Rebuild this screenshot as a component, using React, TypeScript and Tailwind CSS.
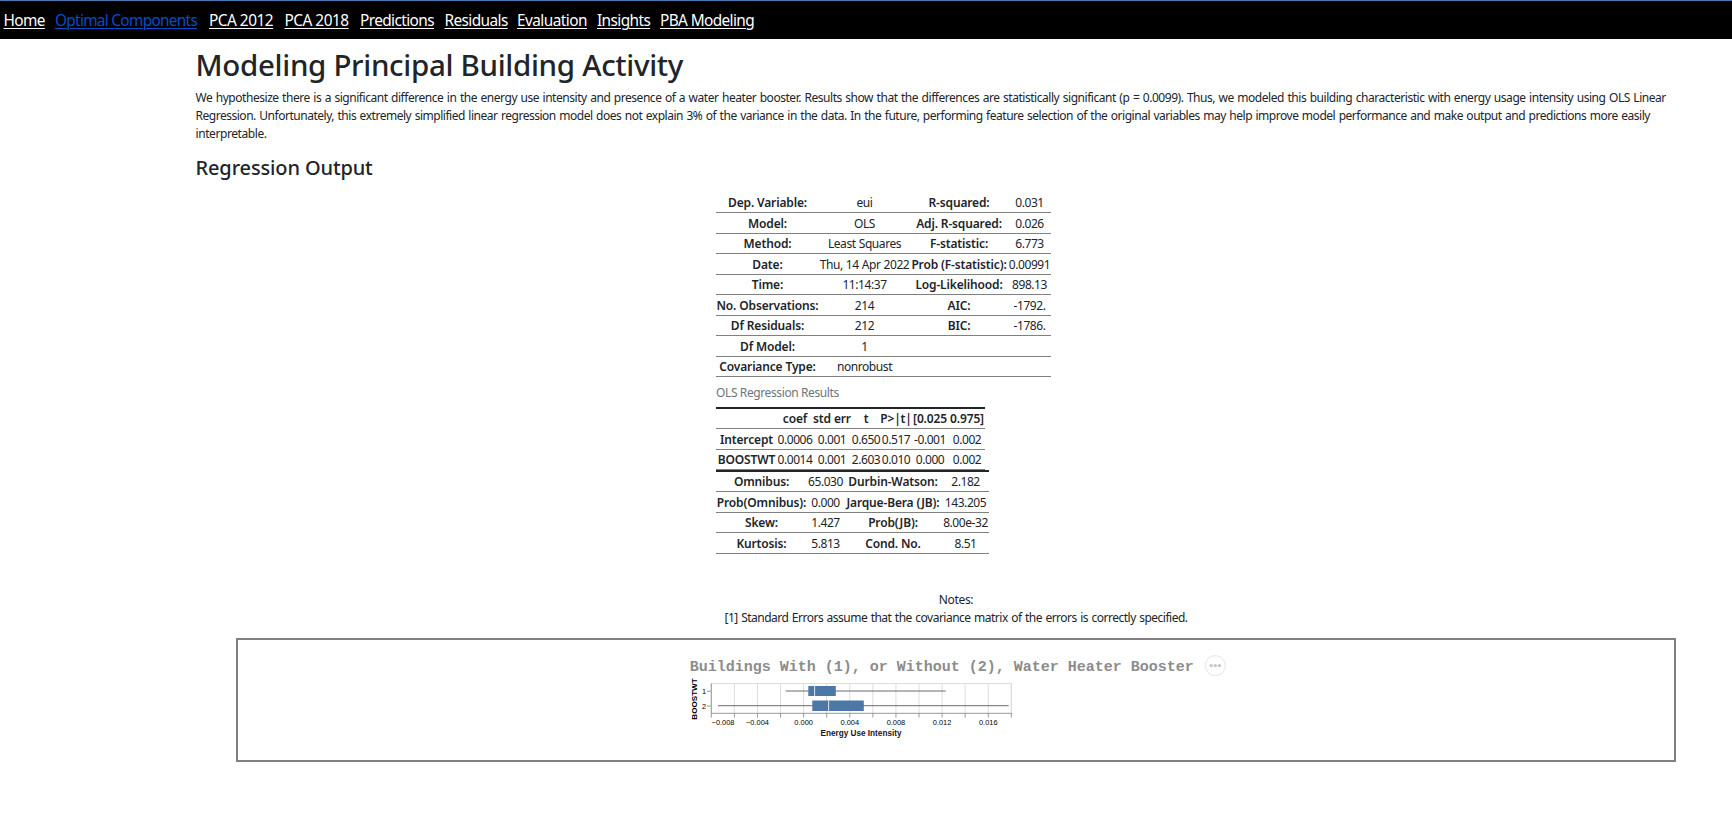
import React from 'react';

type NavItem = { label: string; cls: string };
type Cell = { t: string; w: string; b?: boolean };

const nav: NavItem[] = [
  { label: 'Home', cls: 'w-[40px] text-white tracking-[-0.6px]' },
  { label: 'Optimal Components', cls: 'w-[142.5px] text-[#0a4cc9] tracking-[-0.71px]' },
  { label: 'PCA 2012', cls: 'w-[64px] text-white tracking-[-0.5px]' },
  { label: 'PCA 2018', cls: 'w-[64px] text-white tracking-[-0.5px]' },
  { label: 'Predictions', cls: 'w-[73px] text-white tracking-[-0.6px]' },
  { label: 'Residuals', cls: 'w-[61px] text-white tracking-[-0.6px]' },
  { label: 'Evaluation', cls: 'w-[68.5px] text-white tracking-[-0.55px]' },
  { label: 'Insights', cls: 'w-[51.5px] text-white tracking-[-0.6px]' },
  { label: 'PBA Modeling', cls: 'w-[94px] text-white tracking-[-0.62px]' },
];

function Row({ cells, tall }: { cells: Cell[]; tall: boolean }) {
  return (
    <div className={`flex border-b border-[#808080] ${tall ? 'h-[21px] pt-px' : 'h-[20px]'}`}>
      {cells.map((c, i) => (
        <div
          key={i}
          className={`${c.w} flex justify-center whitespace-nowrap leading-[19px] ${
            c.b ? 'font-semibold tracking-[-0.15px]' : 'tracking-[-0.43px] [word-spacing:0.4px]'
          }`}
        >
          <span>{c.t}</span>
        </div>
      ))}
    </div>
  );
}

const summary: [string, string, string, string][] = [
  ['Dep. Variable:', 'eui', 'R-squared:', '0.031'],
  ['Model:', 'OLS', 'Adj. R-squared:', '0.026'],
  ['Method:', 'Least Squares', 'F-statistic:', '6.773'],
  ['Date:', 'Thu, 14 Apr 2022', 'Prob (F-statistic):', '0.00991'],
  ['Time:', '11:14:37', 'Log-Likelihood:', '898.13'],
  ['No. Observations:', '214', 'AIC:', '-1792.'],
  ['Df Residuals:', '212', 'BIC:', '-1786.'],
  ['Df Model:', '1', '', ''],
  ['Covariance Type:', 'nonrobust', '', ''],
];

const coefs: string[][] = [
  ['', 'coef', 'std err', 't', 'P>|t|', '[0.025', '0.975]'],
  ['Intercept', '0.0006', '0.001', '0.650', '0.517', '-0.001', '0.002'],
  ['BOOSTWT', '0.0014', '0.001', '2.603', '0.010', '0.000', '0.002'],
];
const coefW = ['w-[61px]', 'w-[36px]', 'w-[38px]', 'w-[30px]', 'w-[30px]', 'w-[38px]', 'w-[36px]'];

const tests: [string, string, string, string][] = [
  ['Omnibus:', '65.030', 'Durbin-Watson:', '2.182'],
  ['Prob(Omnibus):', '0.000', 'Jarque-Bera (JB):', '143.205'],
  ['Skew:', '1.427', 'Prob(JB):', '8.00e-32'],
  ['Kurtosis:', '5.813', 'Cond. No.', '8.51'],
];

const step = 23.08;
const ticks = Array.from({ length: 14 }, (_, i) => 22.3 + i * step);
const labels = ['−0.008', '−0.004', '0.000', '0.004', '0.008', '0.012', '0.016'];

function Chart() {
  return (
    <svg width="545" height="96" viewBox="0 0 545 96" className="block">
      <text x="0.7" y="21.2" className="fill-[#8c8c8c] font-['Liberation_Mono'] text-[15px] font-bold">
        Buildings With (1), or Without (2), Water Heater Booster
      </text>
      <g>
        <circle cx="526.3" cy="15.6" r="10" fill="white" stroke="#e4e4e4" />
        <g fill="#c6c6c6">
          <circle cx="522.2" cy="15.6" r="1.7" />
          <circle cx="526.3" cy="15.6" r="1.7" />
          <circle cx="530.4" cy="15.6" r="1.7" />
        </g>
      </g>
      {ticks.map((x, i) => (
        <g key={i}>
          <path d={`M${x} 33.5V63`} stroke="#dddddd" />
          <path d={`M${x} 63V67.5`} stroke="#999999" />
        </g>
      ))}
      <path d="M22.3 33.5H322.3V63" fill="none" stroke="#dddddd" />
      <path d="M22.3 33.5V63.3H322.3M18 41.2H22M18 56H22" fill="none" stroke="#999999" />
      <path d="M96.7 41H256.7M29 55.7H319.7" stroke="#6a6a6a" />
      <path d="M119.3 36h27.5v10h-27.5zM123.3 50.5h51.5v10.5h-51.5z" fill="#4c78a8" />
      <path d="M125.6 36v10M139.6 50.5v10.5" stroke="#ffffff" strokeOpacity="0.8" />
      <g className="fill-black font-['Liberation_Sans'] text-[7.4px]">
        {labels.map((l, i) => (
          <text key={l} x={i === 0 ? 22.6 : 22.3 + i * 2 * step} y="74.5" textAnchor={i === 0 ? 'start' : 'middle'}>
            {l}
          </text>
        ))}
        <text x="17" y="43.8" textAnchor="end">1</text>
        <text x="17" y="58.6" textAnchor="end">2</text>
      </g>
      <text x="172" y="86" textAnchor="middle" className="fill-[#1a1a1a] font-['Liberation_Sans'] text-[8.2px] font-bold">
        Energy Use Intensity
      </text>
      <text transform="translate(7.6 49) rotate(-90)" textAnchor="middle" className="fill-black font-['Liberation_Sans'] text-[8.1px] font-bold">
        BOOSTWT
      </text>
    </svg>
  );
}

export default function App() {
  return (
    <div className="h-[825px] overflow-hidden bg-white font-['Noto_Sans',sans-serif] text-[12px] leading-[18px] text-[#212529]">
      <nav className="flex h-[39px] gap-[11.5px] border-t border-[#4878b0] bg-black pl-[3.5px] pt-[8px] text-[15.4px] leading-[24px]">
        {nav.map((n) => (
          <a key={n.label} href="#" className={`${n.cls} whitespace-nowrap underline decoration-1 underline-offset-2`}>
            {n.label}
          </a>
        ))}
      </nav>
      <main className="pl-[195.5px]">
        <h1 className="pt-[8px] text-[29.5px] font-medium leading-[36px] tracking-[-0.31px]">Modeling Principal Building Activity</h1>
        <div className="whitespace-nowrap pt-[6px] text-[12px] [word-spacing:0.8px]">
          <p className="tracking-[-0.458px]">We hypothesize there is a significant difference in the energy use intensity and presence of a water heater booster. Results show that the differences are statistically significant (p = 0.0099). Thus, we modeled this building characteristic with energy usage intensity using OLS Linear</p>
          <p className="tracking-[-0.478px]">Regression. Unfortunately, this extremely simplified linear regression model does not explain 3% of the variance in the data. In the future, performing feature selection of the original variables may help improve model performance and make output and predictions more easily</p>
          <p className="tracking-[-0.42px]">interpretable.</p>
        </div>
        <h2 className="pt-[13px] text-[20px] font-medium leading-[24px] tracking-[-0.13px]">Regression Output</h2>
        <div className="pl-[520.5px] pt-[12px]">
          <div className="w-[335px]">
            {summary.map((r, i) => (
              <Row
                key={i}
                tall={i === 0 || i % 2 === 1}
                cells={[
                  { t: r[0], w: 'w-[103px]', b: true },
                  { t: r[1], w: 'w-[91px]' },
                  { t: r[2], w: 'w-[98px]', b: true },
                  { t: r[3], w: 'w-[43px]' },
                ]}
              />
            ))}
          </div>
          <p className="pt-[7px] text-[#6c757d] tracking-[-0.39px]">OLS Regression Results</p>
          <div className="mt-[5px] w-[269px] border-t-2 border-[#212529]">
            {coefs.map((r, i) => (
              <Row
                key={i}
                tall={i === 1}
                cells={r.map((t, j) => ({ t, w: coefW[j], b: i === 0 || j === 0 }))}
              />
            ))}
          </div>
          <div className="w-[273px] border-t-2 border-[#212529]">
            {tests.map((r, i) => (
              <Row
                key={i}
                tall={i % 2 === 1}
                cells={[
                  { t: r[0], w: 'w-[91px]', b: true },
                  { t: r[1], w: 'w-[37px]' },
                  { t: r[2], w: 'w-[98px]', b: true },
                  { t: r[3], w: 'w-[47px]' },
                ]}
              />
            ))}
          </div>
        </div>
        <div className="w-[1521px] pt-[37px] text-center tracking-[-0.5px] [word-spacing:0.8px]">
          <p className="tracking-[-0.35px]">Notes:</p>
          <p>[1] Standard Errors assume that the covariance matrix of the errors is correctly specified.</p>
        </div>
      </main>
      <section className="ml-[236px] mt-[11px] h-[124px] w-[1440px] border-2 border-[#808080] pl-[451px] pt-[10px]">
        <Chart />
      </section>
    </div>
  );
}
